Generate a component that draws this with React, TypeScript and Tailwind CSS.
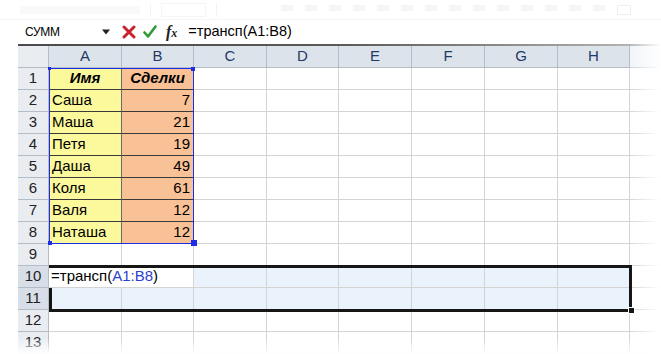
import React from "react";

const cols = [
  { l: "A", w: 73 },
  { l: "B", w: 72 },
  { l: "C", w: 73 },
  { l: "D", w: 72 },
  { l: "E", w: 73 },
  { l: "F", w: 73 },
  { l: "G", w: 73 },
  { l: "H", w: 72 },
];

const data: [string, string][] = [
  ["Имя", "Сделки"],
  ["Саша", "7"],
  ["Маша", "21"],
  ["Петя", "19"],
  ["Даша", "49"],
  ["Коля", "61"],
  ["Валя", "12"],
  ["Наташа", "12"],
];

function wc(w: number) {
  return w === 73 ? "w-[73px]" : "w-[72px]";
}

function Cell({ r, c }: { r: number; c: number }) {
  const w = wc(cols[c].w);
  if (r >= 1 && r <= 8 && c <= 1) {
    const bg = c === 0 ? "bg-[#fbf99c]" : "bg-[#f9c196]";
    const val = data[r - 1][c];
    const header = r === 1;
    return (
      <div
        className={`${w} h-full shrink-0 ${bg} border-r border-b border-r-[#6a6a6a] border-b-[#3a3a3a] flex items-center px-[3px] text-[15px] text-black overflow-hidden ${
          header ? "justify-center font-bold italic" : c === 1 ? "justify-end" : "justify-start"
        }`}
      >
        {val}
      </div>
    );
  }
  if (r === 10 && c === 0) {
    return (
      <div className={`${w} h-full shrink-0 bg-white border-b border-b-[#d4d4d4] flex items-center px-[2px] text-[15px] text-black whitespace-nowrap overflow-visible relative z-10`}>
        <span>
          =трансп(<span className="text-[#2b3fd0]">A1:B8</span>)
        </span>
      </div>
    );
  }
  if (r === 10 && c === 1) {
    return <div className={`${w} h-full shrink-0 bg-white border-r border-b border-[#d4d4d4]`} />;
  }
  if (r === 10 || r === 11) {
    return <div className={`${w} h-full shrink-0 bg-[#eaf2fb] border-r border-b border-[#d4d4d4]`} />;
  }
  return <div className={`${w} h-full shrink-0 bg-white border-r border-b border-[#d4d4d4]`} />;
}

function RowHeader({ n }: { n: number }) {
  const sel = n === 10 || n === 11;
  return (
    <div
      className={`w-[31px] h-full shrink-0 border-r border-b border-[#b4bcc8] flex items-center justify-center text-[15px] text-[#222] ${
        sel ? "bg-[#d7dee8]" : "bg-[#e9edf2]"
      }`}
    >
      {n}
    </div>
  );
}

function Row({ n }: { n: number }) {
  return (
    <div className="flex h-[22px] shrink-0">
      <RowHeader n={n} />
      {cols.map((_, c) => (
        <Cell key={c} r={n} c={c} />
      ))}
      <div className="flex-1 h-full bg-white border-b border-[#d4d4d4]" />
    </div>
  );
}

function RedX() {
  return (
    <svg width="14" height="14" viewBox="0 0 14 14">
      <path d="M2 2 L12 12 M12 2 L2 12" stroke="#c8232a" strokeWidth="3" strokeLinecap="round" />
    </svg>
  );
}

function GreenCheck() {
  return (
    <svg width="14" height="14" viewBox="0 0 14 14">
      <path d="M1.5 7.5 L5 11.5 L12.5 1.5" stroke="#2f9a37" strokeWidth="2.6" fill="none" strokeLinecap="round" strokeLinejoin="round" />
    </svg>
  );
}

export default function App() {
  const rows = Array.from({ length: 13 }, (_, i) => i + 1);
  return (
    <div className="w-[661px] h-[354px] bg-white relative overflow-hidden font-['Liberation_Sans',Arial,sans-serif]">
      {/* faint ribbon */}
      <div className="h-[20px] flex items-center border-b border-[#f0f0f0] px-[20px] gap-[10px] opacity-60">
        <div className="w-[120px] h-[8px] bg-[#f6f6f6]" />
        <div className="w-[1px] h-[14px] bg-[#ececec]" />
        <div className="w-[45px] h-[14px] border border-[#efefef]" />
        <div className="w-[1px] h-[14px] bg-[#ececec]" />
        <div className="flex-1 flex gap-[12px] justify-end pr-[10px]">
          {Array.from({ length: 14 }, (_, i) => (
            <div key={i} className="w-[12px] h-[6px] bg-[#f0f0f0]" />
          ))}
          <div className="w-[14px] h-[10px] border border-[#e4e4e4]" />
        </div>
      </div>
      {/* formula bar */}
      <div className="h-[24px] flex items-center">
        <div className="w-[100px] pl-[25px] text-[12px] text-black tracking-[-0.3px]">СУММ</div>
        <svg width="10" height="6" viewBox="0 0 10 6" className="ml-[1px]">
          <path d="M1 0.5 L9 0.5 L5 5.5 Z" fill="#222" />
        </svg>
        <div className="ml-[11px] flex items-center">
          <RedX />
        </div>
        <div className="ml-[7px] flex items-center">
          <GreenCheck />
        </div>
        <div className="ml-[9px] font-['Liberation_Serif',serif] italic font-bold text-[16px] text-[#222] leading-none">
          f<span className="text-[12px]">x</span>
        </div>
        <div className="ml-[11px] text-[14.5px] text-black">=трансп(A1:B8)</div>
      </div>
      {/* grid */}
      <div className="relative ml-[18px]">
        <div className="h-[2px] bg-gradient-to-r from-[#4a4a4a] via-[#5a5a5a] to-[#bdbdbd]" />
        <div className="flex h-[22px]">
          <div className="w-[31px] h-full shrink-0 bg-[#e9edf2] border-r border-b border-[#b4bcc8]" />
          {cols.map((c) => (
            <div
              key={c.l}
              className={`${wc(c.w)} h-full shrink-0 bg-[#dde3eb] border-r border-b border-[#b4bcc8] flex items-center justify-center text-[15px] text-[#1e3a66]`}
            >
              {c.l}
            </div>
          ))}
          <div className="flex-1 h-full bg-[#f1f4f8] border-b border-[#c8d0da]" />
        </div>
        {rows.map((n) => (
          <Row key={n} n={n} />
        ))}

        {/* reference range highlight A1:B8 */}
        <div className="absolute left-[31px] top-[24px] w-[145px] h-[176px] border border-[#1d2ee8] pointer-events-none" />
        <div className="absolute left-[30px] top-[23px] w-[3px] h-[3px] bg-[#1d2ee8]" />
        <div className="absolute left-[173px] top-[23px] w-[4px] h-[4px] bg-[#1d2ee8]" />
        <div className="absolute left-[30px] top-[197px] w-[4px] h-[4px] bg-[#1d2ee8]" />
        <div className="absolute left-[173px] top-[196px] w-[6px] h-[6px] bg-[#1d2ee8]" />

        {/* selection A10:H11 */}
        <div className="absolute left-[31px] top-[221px] w-[583px] h-[47px] border-t-[3px] border-r-[3px] border-b-[3px] border-[#161616] pointer-events-none z-20" />
        <div className="absolute left-[31px] top-[244px] w-[3px] h-[24px] bg-[#161616] z-20" />
        <div className="absolute left-[610px] top-[263px] w-[7px] h-[7px] bg-[#161616] border border-white z-30" />
      </div>

      {/* edge fades */}
      <div className="absolute right-0 top-[40px] w-[32px] h-[314px] bg-gradient-to-r from-transparent to-white pointer-events-none" />
      <div className="absolute left-0 bottom-0 w-full h-[16px] bg-gradient-to-b from-transparent to-white pointer-events-none" />
      <div className="absolute left-0 top-[40px] w-[20px] h-[314px] bg-gradient-to-l from-transparent to-white opacity-70 pointer-events-none" />
    </div>
  );
}
